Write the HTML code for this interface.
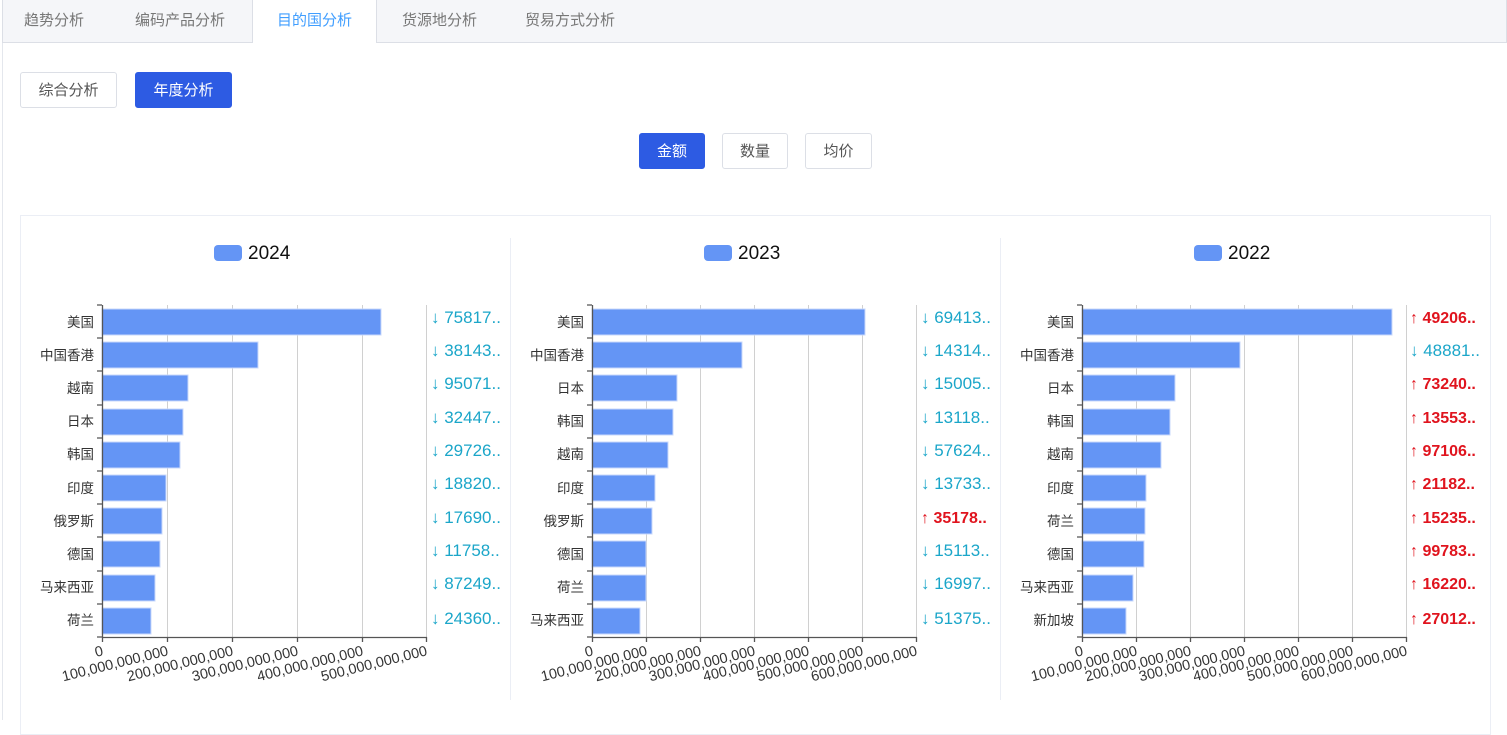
<!DOCTYPE html>
<html><head><meta charset="utf-8"><style>
*{margin:0;padding:0;box-sizing:border-box}
body{width:1507px;height:720px;background:#fff;font-family:"Liberation Sans","Noto Sans CJK SC",sans-serif;position:relative;overflow:hidden}
.tabs{position:absolute;left:2px;top:0;width:1505px;height:43px;background:#f5f6f9;border:1px solid #dcdfe6;border-top:none}
.tab{position:absolute;top:0;height:43px;line-height:42px;font-size:15px;color:#777;text-align:center}
.tab.act{background:#fff;color:#409eff;border-left:1px solid #dcdfe6;border-right:1px solid #dcdfe6;height:43px}
.lb{position:absolute;left:2px;top:43px;width:1px;height:677px;background:#e4e7ed}
.btn{position:absolute;border:1px solid #dcdfe6;border-radius:3px;font-size:15px;color:#555;text-align:center;background:#fff}
.btn.on{background:#2d5be3;border-color:#2d5be3;color:#fff}
.card{position:absolute;left:20px;top:215px;width:1471px;height:520px;border:1px solid #ebeef5}
svg{position:absolute;left:0;top:0}
</style></head><body>
<div class="tabs">
<div class="tab" style="left:-4px;width:110px">趋势分析</div>
<div class="tab" style="left:107px;width:140px">编码产品分析</div>
<div class="tab act" style="left:249px;width:125px">目的国分析</div>
<div class="tab" style="left:374px;width:125px">货源地分析</div>
<div class="tab" style="left:497px;width:140px">贸易方式分析</div>
</div>
<div class="lb"></div>
<div class="btn" style="left:20px;top:72px;width:97px;height:36px;line-height:36px">综合分析</div>
<div class="btn on" style="left:135px;top:72px;width:97px;height:36px;line-height:36px">年度分析</div>
<div class="btn on" style="left:639px;top:133px;width:66px;height:36px;line-height:36px">金额</div>
<div class="btn" style="left:722px;top:133px;width:66px;height:36px;line-height:36px">数量</div>
<div class="btn" style="left:805px;top:133px;width:67px;height:36px;line-height:36px">均价</div>
<div class="card"></div>
<svg width="1507" height="720" font-family="Liberation Sans, Noto Sans CJK SC, sans-serif">
<g stroke="#ebeef5"><line x1="510.5" y1="238" x2="510.5" y2="700"/><line x1="1000.5" y1="238" x2="1000.5" y2="700"/></g>
<g fill="#6495f5"><rect x="214" y="245" width="28" height="16" rx="4"/><rect x="704" y="245" width="28" height="16" rx="4"/><rect x="1194" y="245" width="28" height="16" rx="4"/></g>
<g font-size="19" fill="#111"><text x="248" y="259">2024</text><text x="738" y="259">2023</text><text x="1228" y="259">2022</text></g>
<g stroke="#d0d0d0">
<line x1="167.5" y1="305" x2="167.5" y2="637"/><line x1="232.5" y1="305" x2="232.5" y2="637"/><line x1="297.5" y1="305" x2="297.5" y2="637"/><line x1="362.5" y1="305" x2="362.5" y2="637"/><line x1="426.5" y1="305" x2="426.5" y2="637"/>
<line x1="646.5" y1="305" x2="646.5" y2="637"/><line x1="700.5" y1="305" x2="700.5" y2="637"/><line x1="754.5" y1="305" x2="754.5" y2="637"/><line x1="808.5" y1="305" x2="808.5" y2="637"/><line x1="862.5" y1="305" x2="862.5" y2="637"/><line x1="916.5" y1="305" x2="916.5" y2="637"/>
<line x1="1136.5" y1="305" x2="1136.5" y2="637"/><line x1="1190.5" y1="305" x2="1190.5" y2="637"/><line x1="1244.5" y1="305" x2="1244.5" y2="637"/><line x1="1298.5" y1="305" x2="1298.5" y2="637"/><line x1="1352.5" y1="305" x2="1352.5" y2="637"/><line x1="1406.5" y1="305" x2="1406.5" y2="637"/>
</g>
<g fill="#6495f5" stroke="#c8d8fb" stroke-width="1">
<rect x="102" y="309" width="279" height="26"/><rect x="102" y="342" width="156" height="26"/><rect x="102" y="375" width="86" height="26"/><rect x="102" y="409" width="81" height="26"/><rect x="102" y="442" width="78" height="26"/><rect x="102" y="475" width="64" height="26"/><rect x="102" y="508" width="60" height="26"/><rect x="102" y="541" width="58" height="26"/><rect x="102" y="575" width="53" height="26"/><rect x="102" y="608" width="49" height="26"/>
<rect x="592" y="309" width="273" height="26"/><rect x="592" y="342" width="150" height="26"/><rect x="592" y="375" width="85" height="26"/><rect x="592" y="409" width="81" height="26"/><rect x="592" y="442" width="76" height="26"/><rect x="592" y="475" width="63" height="26"/><rect x="592" y="508" width="60" height="26"/><rect x="592" y="541" width="54" height="26"/><rect x="592" y="575" width="54" height="26"/><rect x="592" y="608" width="48" height="26"/>
<rect x="1082" y="309" width="310" height="26"/><rect x="1082" y="342" width="158" height="26"/><rect x="1082" y="375" width="93" height="26"/><rect x="1082" y="409" width="88" height="26"/><rect x="1082" y="442" width="79" height="26"/><rect x="1082" y="475" width="64" height="26"/><rect x="1082" y="508" width="63" height="26"/><rect x="1082" y="541" width="62" height="26"/><rect x="1082" y="575" width="51" height="26"/><rect x="1082" y="608" width="44" height="26"/>
</g>
<g stroke="#555" stroke-width="1.3" fill="none">
<path d="M102.5 305V637.5H427M97 305H102M97 338H102M97 371H102M97 405H102M97 438H102M97 471H102M97 504H102M97 537H102M97 571H102M97 604H102M97 637H102M167.5 637v5M232.5 637v5M297.5 637v5M362.5 637v5M426.5 637v5M102.5 637v5"/>
<path d="M592.5 305V637.5H917M587 305H592M587 338H592M587 371H592M587 405H592M587 438H592M587 471H592M587 504H592M587 537H592M587 571H592M587 604H592M587 637H592M592.5 637v5M646.5 637v5M700.5 637v5M754.5 637v5M808.5 637v5M862.5 637v5M916.5 637v5"/>
<path d="M1082.5 305V637.5H1407M1077 305H1082M1077 338H1082M1077 371H1082M1077 405H1082M1077 438H1082M1077 471H1082M1077 504H1082M1077 537H1082M1077 571H1082M1077 604H1082M1077 637H1082M1082.5 637v5M1136.5 637v5M1190.5 637v5M1244.5 637v5M1298.5 637v5M1352.5 637v5M1406.5 637v5"/>
</g>
<g font-size="13.5" fill="#333" text-anchor="end">
<text x="94" y="327">美国</text><text x="94" y="360">中国香港</text><text x="94" y="393">越南</text><text x="94" y="426">日本</text><text x="94" y="459">韩国</text><text x="94" y="493">印度</text><text x="94" y="526">俄罗斯</text><text x="94" y="559">德国</text><text x="94" y="592">马来西亚</text><text x="94" y="625">荷兰</text>
<text x="584" y="327">美国</text><text x="584" y="360">中国香港</text><text x="584" y="393">日本</text><text x="584" y="426">韩国</text><text x="584" y="459">越南</text><text x="584" y="493">印度</text><text x="584" y="526">俄罗斯</text><text x="584" y="559">德国</text><text x="584" y="592">荷兰</text><text x="584" y="625">马来西亚</text>
<text x="1074" y="327">美国</text><text x="1074" y="360">中国香港</text><text x="1074" y="393">日本</text><text x="1074" y="426">韩国</text><text x="1074" y="459">越南</text><text x="1074" y="493">印度</text><text x="1074" y="526">荷兰</text><text x="1074" y="559">德国</text><text x="1074" y="592">马来西亚</text><text x="1074" y="625">新加坡</text>
</g>
<g font-size="14.5" fill="#333" text-anchor="end">
<text transform="translate(104,655) rotate(-14)">0</text><text transform="translate(169,655) rotate(-14)">100,000,000,000</text><text transform="translate(234,655) rotate(-14)">200,000,000,000</text><text transform="translate(299,655) rotate(-14)">300,000,000,000</text><text transform="translate(364,655) rotate(-14)">400,000,000,000</text><text transform="translate(428,655) rotate(-14)">500,000,000,000</text>
<text transform="translate(594,655) rotate(-14)">0</text><text transform="translate(648,655) rotate(-14)">100,000,000,000</text><text transform="translate(702,655) rotate(-14)">200,000,000,000</text><text transform="translate(756,655) rotate(-14)">300,000,000,000</text><text transform="translate(810,655) rotate(-14)">400,000,000,000</text><text transform="translate(864,655) rotate(-14)">500,000,000,000</text><text transform="translate(918,655) rotate(-14)">600,000,000,000</text>
<text transform="translate(1084,655) rotate(-14)">0</text><text transform="translate(1138,655) rotate(-14)">100,000,000,000</text><text transform="translate(1192,655) rotate(-14)">200,000,000,000</text><text transform="translate(1246,655) rotate(-14)">300,000,000,000</text><text transform="translate(1300,655) rotate(-14)">400,000,000,000</text><text transform="translate(1354,655) rotate(-14)">500,000,000,000</text><text transform="translate(1408,655) rotate(-14)">600,000,000,000</text>
</g>
<g font-size="17" fill="#1ba6c9">
<text x="431" y="323">↓ 75817..</text><text x="431" y="356">↓ 38143..</text><text x="431" y="389">↓ 95071..</text><text x="431" y="423">↓ 32447..</text><text x="431" y="456">↓ 29726..</text><text x="431" y="489">↓ 18820..</text><text x="431" y="523">↓ 17690..</text><text x="431" y="556">↓ 11758..</text><text x="431" y="589">↓ 87249..</text><text x="431" y="624">↓ 24360..</text>
<text x="921" y="323">↓ 69413..</text><text x="921" y="356">↓ 14314..</text><text x="921" y="389">↓ 15005..</text><text x="921" y="423">↓ 13118..</text><text x="921" y="456">↓ 57624..</text><text x="921" y="489">↓ 13733..</text><text x="921" y="556">↓ 15113..</text><text x="921" y="589">↓ 16997..</text><text x="921" y="624">↓ 51375..</text>
<text x="1410" y="356">↓ 48881..</text>
</g>
<g font-size="16" fill="#e0141e" font-weight="bold">
<text x="921" y="523">↑ 35178..</text>
<text x="1410" y="323">↑ 49206..</text><text x="1410" y="389">↑ 73240..</text><text x="1410" y="423">↑ 13553..</text><text x="1410" y="456">↑ 97106..</text><text x="1410" y="489">↑ 21182..</text><text x="1410" y="523">↑ 15235..</text><text x="1410" y="556">↑ 99783..</text><text x="1410" y="589">↑ 16220..</text><text x="1410" y="624">↑ 27012..</text>
</g>
</svg>
</body></html>
